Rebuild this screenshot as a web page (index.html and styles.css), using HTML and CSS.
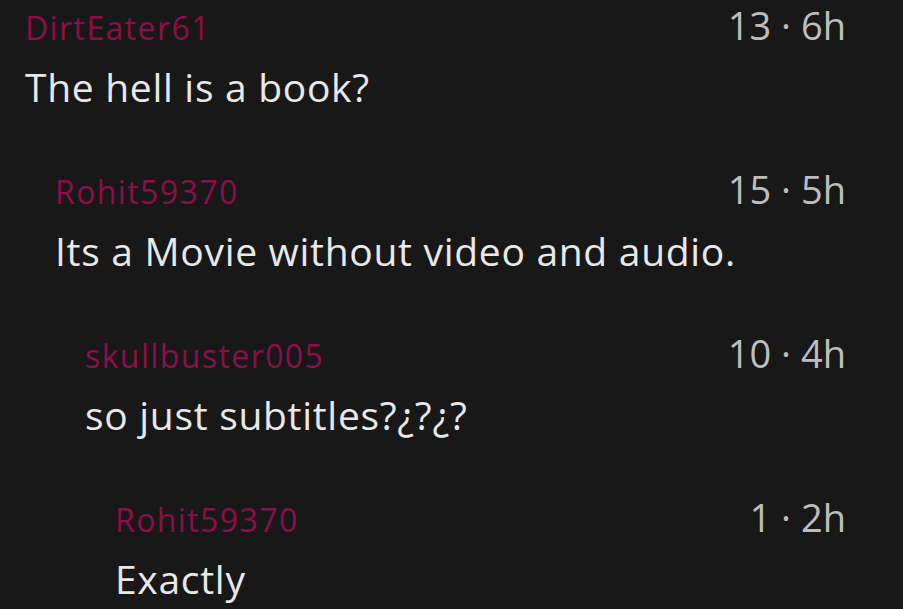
FILE: index.html
```html
<!DOCTYPE html>
<html>
<head>
<meta charset="utf-8">
<link rel="stylesheet" href="styles.css">
</head>
<body>
<div class="thread">
  <div class="comment lvl0">
    <div class="head"><span class="user">DirtEater61</span><span class="meta">13 · 6h</span></div>
    <div class="text">The hell is a book?</div>
  </div>
  <div class="comment lvl1">
    <div class="head"><span class="user">Rohit59370</span><span class="meta">15 · 5h</span></div>
    <div class="text">Its a Movie without video and audio.</div>
  </div>
  <div class="comment lvl2">
    <div class="head"><span class="user">skullbuster005</span><span class="meta">10 · 4h</span></div>
    <div class="text">so just subtitles?¿?¿?</div>
  </div>
  <div class="comment lvl3">
    <div class="head"><span class="user">Rohit59370</span><span class="meta">1 · 2h</span></div>
    <div class="text">Exactly</div>
  </div>
</div>
</body>
</html>
```
FILE: styles.css
```css
html, body {
  margin: 0;
  padding: 0;
  background: #181818;
}
.thread {
  padding: 5px 57px 0 25px;
  font-family: "Open Sans", "Noto Sans", sans-serif;
}
.comment {
  padding-bottom: 57px;
}
.comment:last-child {
  padding-bottom: 0;
}
.lvl1 { margin-left: 30px; }
.lvl2 { margin-left: 60px; }
.lvl3 { margin-left: 90px; }
.head {
  display: flex;
  justify-content: space-between;
  align-items: baseline;
  height: 40px;
  line-height: 40px;
}
.user {
  color: #8c0f48;
  font-size: 32px;
  letter-spacing: 1.4px;
}
.meta {
  color: #bdbdbd;
  font-size: 38px;
}
.text {
  margin-top: 17px;
  color: #e8e8e8;
  font-size: 39px;
  line-height: 50px;
  letter-spacing: 0.7px;
}
```
